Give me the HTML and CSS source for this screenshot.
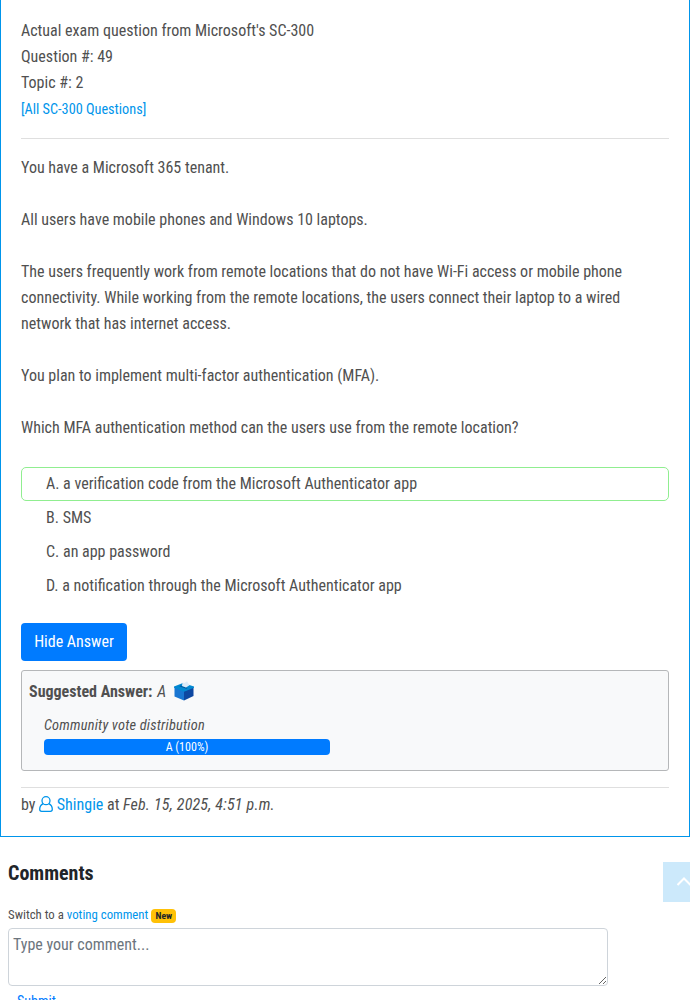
FILE: index.html
```html
<!DOCTYPE html>
<html lang="en">
<head>
<meta charset="utf-8">
<title>SC-300 Question 49</title>
<link rel="stylesheet" href="styles.css">
</head>
<body>
<main class="card">
  <div class="line">Actual exam question from Microsoft's SC-300</div>
  <div class="line">Question #: 49</div>
  <div class="line">Topic #: 2</div>
  <div class="line small"><a class="link">[All SC-300 Questions]</a></div>
  <hr class="rule">
  <p class="para">You have a Microsoft 365 tenant.</p>
  <p class="para">All users have mobile phones and Windows 10 laptops.</p>
  <p class="para">The users frequently work from remote locations that do not have Wi-Fi access or mobile phone<br>connectivity. While working from the remote locations, the users connect their laptop to a wired<br>network that has internet access.</p>
  <p class="para">You plan to implement multi-factor authentication (MFA).</p>
  <p class="para">Which MFA authentication method can the users use from the remote location?</p>
  <ul class="choices">
    <li class="choice correct">A. a verification code from the Microsoft Authenticator app</li>
    <li class="choice">B. SMS</li>
    <li class="choice">C. an app password</li>
    <li class="choice">D. a notification through the Microsoft Authenticator app</li>
  </ul>
  <button class="hide">Hide Answer</button>
  <section class="answer">
    <div class="suggested"><b>Suggested Answer:</b> <i class="pick">A</i>
      <svg class="ballot" viewBox="0 0 20 20"><path fill="#1976d2" d="M.5 6L10 10v9.500L.5 15.500z"/><path fill="#0d47a1" d="M19.500 6L10 10v9.500l9.500-4.500z"/><path fill="#0288d1" d="M0 5.500l9-3.500 11 3.500v1.200L10 10.800 0 6.700z"/><path fill="#01579b" d="M6.500 4.600l7 2.400-1.200.8-7-2.500z"/><path fill="#dcebf8" d="M8 5l.5-3.500 2 .5L13 .2l2.500 4L12 6.500z"/></svg>
    </div>
    <div class="distribution">Community vote distribution</div>
    <div class="bar">A (100%)</div>
  </section>
  <hr class="rule">
  <div class="by">by <svg class="user" viewBox="0 0 14 16"><path d="M4.200 7.700C1.700 8.900.7 11 .7 13.300c0 1.300.8 2 1.900 2h8.800c1.100 0 1.900-.7 1.900-2 0-2.300-1-4.400-3.500-5.600"/><circle cx="7" cy="4.700" r="4"/></svg> <a class="link">Shingie</a> at <i class="date">Feb. 15, 2025, 4:51 p.m.</i></div>
</main>
<section class="comments">
  <h2 class="title">Comments</h2>
  <div class="switch">Switch to a <a class="link">voting comment</a> <span class="badge">New</span></div>
  <textarea class="input" placeholder="Type your comment..."></textarea>
  <div class="submit">Submit</div>
</section>
<div class="totop"><svg width="16" height="10" viewBox="0 0 16 10"><path d="M1.500 8L8 1.500 14.500 8"/></svg></div>
</body>
</html>
```
FILE: styles.css
```css
* { box-sizing: border-box; }
html, body { margin: 0; height: 1000px; overflow: hidden; }
body { font-family: "Roboto Condensed", Roboto, sans-serif; font-stretch: 75%; font-size: 16px; line-height: 26px; color: #505050; background: #fff; }
.card { height: 837px; border: 1px solid #0095eb; border-top: 0; padding: 18px 20px 0; }
.small { font-size: 14.25px; }
.link { color: #0095eb; }
.rule { border: 0; border-top: 1px solid #dfdfdf; margin: 16px 0; }
.para { margin: 0 0 26px; white-space: nowrap; }
.choices { list-style: none; margin: 0 0 20px; padding: 0; }
.choice { height: 34px; padding: 3px 24px; border: 1px solid transparent; }
.correct { border-color: #90ee90; border-radius: 5px; }
.hide { display: block; height: 38px; width: 106px; padding: 0; border: 0; border-radius: 4px; background: #007bff; color: #fff; font: inherit; }
.answer { margin-top: 9px; height: 101px; border: 1px solid #b5b7b9; border-radius: 3px; background: #f8f9fa; padding: 8px 7px; }
.suggested { height: 26px; }
.pick { margin-left: 1px; }
.ballot { width: 20px; height: 20px; margin-left: 4px; vertical-align: -4px; }
.distribution { margin: 8px 0 0 15px; height: 26px; font-size: 14.4px; font-style: italic; letter-spacing: .2px; }
.bar { margin-left: 15px; width: 286px; height: 16px; border-radius: 4px; background: #007bff; color: #fff; font-size: 12px; line-height: 16px; text-align: center; }
.by { margin-top: -12px; }
.date { letter-spacing: .19px; }
.user { width: 14px; height: 16px; vertical-align: -2px; fill: none; stroke: #0095eb; stroke-width: 1.3; }
.comments { padding: 23px 8px 0; }
.title { margin: 0; font-size: 20px; line-height: 26px; color: #212529; }
.switch { margin-top: 16px; height: 26px; font-size: 12.8px; }
.badge { display: inline-block; width: 25px; height: 14px; border-radius: 4px; background: #ffc107; color: #212529; font-weight: bold; font-size: 9.6px; line-height: 14px; text-align: center; }
.input { display: block; width: 600px; height: 58px; border: 1px solid #ced4da; border-radius: 4px; padding: 3px 4px; font: inherit; }
.input::placeholder { color: #6c757d; }
.submit { padding: 2px 0 0 9px; font-size: 14px; color: #007bff; }
.totop { position: absolute; left: 663px; top: 862px; width: 40px; height: 40px; padding: 15px 0 0 13px; background: #cce9fb; line-height: 0; }
.totop path { fill: none; stroke: #fff; stroke-width: 2; }
```
